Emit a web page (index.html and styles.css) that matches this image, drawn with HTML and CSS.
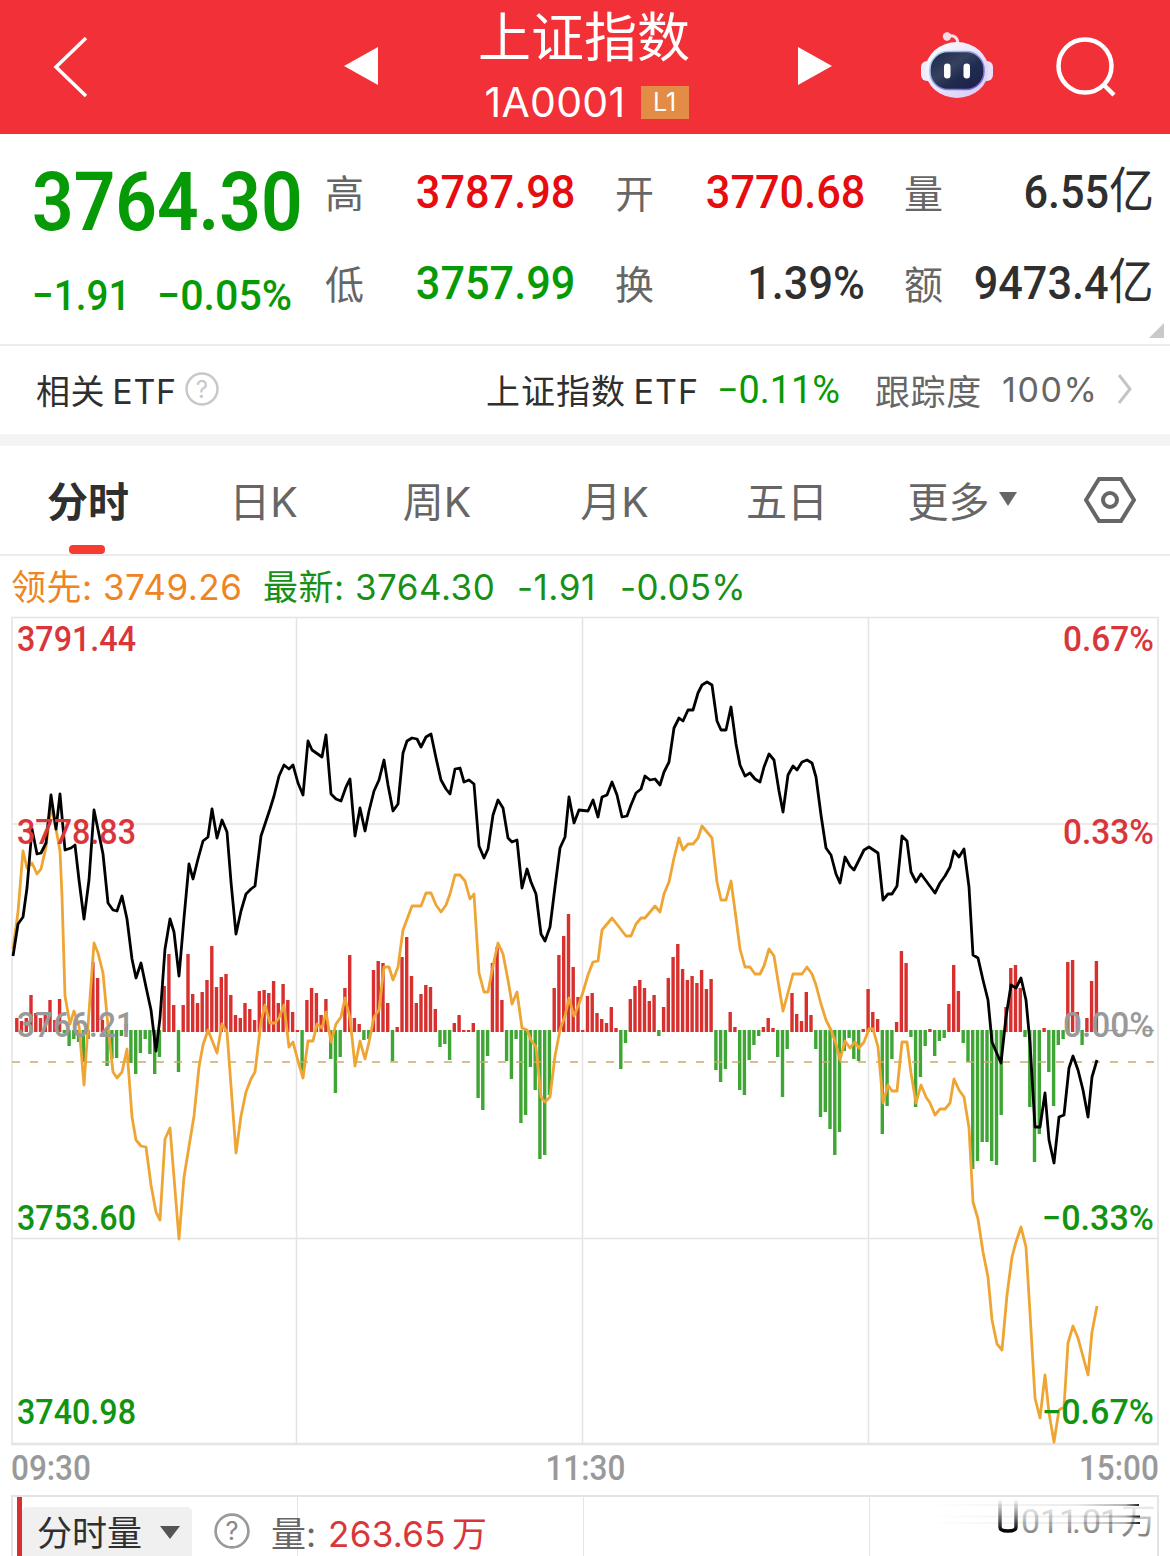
FILE: index.html
```html
<!DOCTYPE html>
<html lang="zh-CN">
<head>
  <meta charset="UTF-8">
  <meta name="viewport" content="width=device-width, initial-scale=1">
  <title>上证指数 1A0001</title>
  <link rel="stylesheet" href="styles.css">
</head>
<body>
  <!-- 顶部导航 -->
  <header class="header">
    <svg class="back" width="40" height="66" viewBox="0 0 40 66"><path d="M35 4 L5 33 L35 62"/></svg>
    <svg class="prev" width="36" height="40" viewBox="0 0 36 40"><path d="M1 20 L35 1 V39 Z"/></svg>
    <div class="title">
      <h1>上证指数</h1>
      <div class="code"><span>1A0001</span><b>L1</b></div>
    </div>
    <svg class="next" width="36" height="40" viewBox="0 0 36 40"><path d="M35 20 L1 1 V39 Z"/></svg>
    <svg class="robot" width="74" height="68" viewBox="0 0 74 68">
      <defs>
        <linearGradient id="shell" x1="0" y1="0" x2="1" y2="1">
          <stop offset="0" stop-color="#fff"/>
          <stop offset=".5" stop-color="#e9e4fb"/>
          <stop offset="1" stop-color="#d3c6f3"/>
        </linearGradient>
        <linearGradient id="rim" x1="0" y1="0" x2="1" y2="1">
          <stop offset="0" stop-color="#a9dcec"/>
          <stop offset="1" stop-color="#6f4fd2"/>
        </linearGradient>
        <linearGradient id="face" x1="0" y1="0" x2="1" y2="1">
          <stop offset="0" stop-color="#1b2748"/>
          <stop offset=".4" stop-color="#36415f"/>
          <stop offset=".6" stop-color="#202b50"/>
          <stop offset="1" stop-color="#1c2047"/>
        </linearGradient>
      </defs>
      <path d="M27 5 Q37 3 38 12" fill="none" stroke="#f6dce9" stroke-width="3"/>
      <circle cx="27" cy="5.500" r="4.200" fill="#f3dce8"/>
      <rect x="1" y="30" width="14" height="20" rx="6" fill="#f0ebfc"/>
      <rect x="59" y="30" width="14" height="20" rx="6" fill="#e8e0fa"/>
      <ellipse cx="37" cy="39" rx="31.500" ry="28" fill="url(#shell)"/>
      <rect x="10" y="20.500" width="54" height="38" rx="18" fill="url(#face)" stroke="url(#rim)" stroke-width="1.500"/>
      <rect x="24" y="32.500" width="6.500" height="15" rx="3.200" fill="#fff"/>
      <rect x="43.500" y="32.500" width="6.500" height="15" rx="3.200" fill="#fff"/>
    </svg>
    <svg class="search" width="64" height="64" viewBox="0 0 64 64"><circle cx="30" cy="30" r="26.500"/><path d="M49 49 L59 59"/></svg>
  </header>

  <!-- 行情数据 -->
  <section class="quote">
    <div class="price">
      <div class="last"><span class="din">3764.30</span></div>
      <div class="change"><span class="din">−1.91</span><span class="din wide">−0.05%</span></div>
    </div>
    <dl class="stats">
      <dt>高</dt><dd class="red"><span class="din">3787.98</span></dd>
      <dt>开</dt><dd class="red"><span class="din">3770.68</span></dd>
      <dt>量</dt><dd><span class="din">6.55<i>亿</i></span></dd>
      <dt>低</dt><dd class="green"><span class="din">3757.99</span></dd>
      <dt>换</dt><dd><span class="din">1.39%</span></dd>
      <dt>额</dt><dd><span class="din">9473.4<i>亿</i></span></dd>
    </dl>
    <span class="corner"></span>
  </section>

  <!-- 相关ETF -->
  <section class="etf">
    <span class="etf-title">相关 ETF</span>
    <svg class="help" width="34" height="34" viewBox="0 0 34 34"><circle cx="17" cy="17" r="15.500"/><text x="17" y="25.500">?</text></svg>
    <span class="etf-name">上证指数 ETF</span>
    <span class="etf-rate"><span class="din wide">−0.11%</span></span>
    <span class="etf-track">跟踪度</span>
    <span class="etf-full">100%</span>
    <svg class="more" width="16" height="32" viewBox="0 0 16 32"><path d="M2 2 L13 16 L2 30"/></svg>
  </section>

  <!-- 周期切换 -->
  <nav class="tabs">
    <a class="active">分时</a>
    <a>日K</a>
    <a>周K</a>
    <a>月K</a>
    <a>五日</a>
    <a class="drop">更多<svg width="18" height="14" viewBox="0 0 18 14"><path d="M0 0 H18 L9 14 Z"/></svg></a>
    <svg class="setting" width="52" height="46" viewBox="0 0 52 46"><path d="M15 2 H37 L50 23 L37 44 H15 L2 23 Z"/><circle cx="26" cy="23" r="7"/></svg>
  </nav>

  <div class="legend">
    <span class="lead">领先: 3749.26</span>
    <span class="new">最新: 3764.30</span>
    <span class="diff">-1.91</span>
    <span class="pct">-0.05%</span>
  </div>

  <!-- 分时图 -->
  <svg class="chart" width="1170" height="832" viewBox="0 615 1170 832">
    <g class="grid">
      <path d="M11 617.500 H1159 M12 824 H1158 M12 1238.500 H1158"/>
      <path d="M12 617 V1444 M296.500 617 V1444 M582.500 617 V1444 M868.500 617 V1444 M1158 617 V1444"/>
      <path class="base" d="M11 1444 H1159"/>
    </g>
    <path class="zero" d="M1108 1030.500 H1158"/>
    <path id="up" class="bar-up"/>
    <path id="down" class="bar-down"/>
    <path class="now" d="M12 1062 H1158"/>
    <polyline id="lead" class="line-lead"/>
    <polyline id="price" class="line-price"/>
    <g class="axis">
      <text class="r" x="17" y="651" textLength="119" lengthAdjust="spacingAndGlyphs">3791.44</text>
      <text class="r" x="17" y="844" textLength="119" lengthAdjust="spacingAndGlyphs">3778.83</text>
      <text class="z" x="17" y="1037" textLength="117" lengthAdjust="spacingAndGlyphs">3766.21</text>
      <text class="g" x="17" y="1230" textLength="119" lengthAdjust="spacingAndGlyphs">3753.60</text>
      <text class="g" x="17" y="1424" textLength="119" lengthAdjust="spacingAndGlyphs">3740.98</text>
      <text class="r" x="1063" y="651" textLength="91" lengthAdjust="spacingAndGlyphs">0.67%</text>
      <text class="r" x="1063" y="844" textLength="91" lengthAdjust="spacingAndGlyphs">0.33%</text>
      <text class="z" x="1063" y="1037" textLength="91" lengthAdjust="spacingAndGlyphs">0.00%</text>
      <text class="g" x="1042" y="1230" textLength="112" lengthAdjust="spacingAndGlyphs">−0.33%</text>
      <text class="g" x="1042" y="1424" textLength="112" lengthAdjust="spacingAndGlyphs">−0.67%</text>
    </g>
  </svg>

  <div class="times"><span class="din">09:30</span><span class="din">11:30</span><span class="din">15:00</span></div>

  <!-- 分时量 -->
  <section class="volume">
    <span class="mark"></span>
    <button class="picker">分时量<svg width="20" height="13" viewBox="0 0 20 13"><path d="M0 0 H20 L10 13 Z"/></svg></button>
    <svg class="help dark" width="36" height="36" viewBox="0 0 34 34"><circle cx="17" cy="17" r="15.500"/><text x="17" y="25.500">?</text></svg>
    <span class="vol-label">量:</span>
    <span class="vol-value">263.65 万</span>
    <svg class="vol-max" width="230" height="48" viewBox="0 0 230 48">
      <defs>
        <linearGradient id="fade" x1="0" y1="4" x2="0" y2="36" gradientUnits="userSpaceOnUse">
          <stop offset="0" stop-color="#999" stop-opacity="0"/>
          <stop offset="1" stop-color="#858585"/>
        </linearGradient>
        <linearGradient id="ink" x1="0" y1="2" x2="0" y2="34" gradientUnits="userSpaceOnUse">
          <stop offset="0" stop-color="#000" stop-opacity="0"/>
          <stop offset=".5" stop-color="#000" stop-opacity=".45"/>
          <stop offset="1" stop-color="#000"/>
        </linearGradient>
        <linearGradient id="streak" x1="0" y1="0" x2="1" y2="0">
          <stop offset="0" stop-color="#000" stop-opacity="0"/>
          <stop offset=".7" stop-color="#000" stop-opacity=".08"/>
          <stop offset=".93" stop-color="#000" stop-opacity=".3"/>
          <stop offset="1" stop-color="#000" stop-opacity=".9"/>
        </linearGradient>
      </defs>
      <path d="M73 3 V30 Q73 34 81 34 Q89 34 89 30 V3" fill="none" stroke="url(#ink)" stroke-width="3.500"/>
      <text class="digits" x="94 113 132 145 155 173" y="36">011.01</text>
      <text class="unit" x="194" y="37">万</text>
      <path d="M0 7 H212 V9 H0 Z M0 18.500 H213 V20.500 H0 Z M0 25 H213 V27 H0 Z" fill="url(#streak)"/>
    </svg>
  </section>

  <script src="script.js"></script>
</body>
</html>
```
FILE: styles.css
```css
* {
  margin: 0;
  padding: 0;
  box-sizing: border-box;
}
body {
  width: 1170px;
  height: 1556px;
  overflow: hidden;
  background: #fff;
  color: #2f2f2f;
  font-family: Inter, 'Noto Sans CJK SC', sans-serif;
}
svg {
  display: block;
  flex: none;
}
.din {
  display: inline-block;
  font-family: Roboto, 'Noto Sans CJK SC', sans-serif;
  font-weight: 500;
  white-space: nowrap;
  transform: scaleX(.92);
  transform-origin: left;
}
/* 顶部导航 */
.header {
  display: grid;
  grid-template-columns: 343px 36px 418px 36px 87px 74px 61px 64px;
  align-items: center;
  height: 134px;
  background: #f23037;
  color: #fff;
}
.back {
  margin-left: 51px;
  fill: none;
  stroke: #fff;
  stroke-width: 3.5;
}
.prev, .next {
  fill: #fff;
  margin-top: -2px;
}
.robot {
  grid-column: 6;
  margin-top: -4px;
}
.search {
  grid-column: 8;
  margin-top: 2px;
  fill: none;
  stroke: #fff;
  stroke-width: 4.5;
}
.title {
  height: 134px;
  text-align: center;
}
.title h1 {
  height: 78px;
  padding-right: 8px;
  font-size: 53px;
  line-height: 76px;
  font-weight: 400;
}
.code {
  display: flex;
  justify-content: center;
  align-items: center;
  gap: 15px;
  height: 48px;
  padding-right: 3px;
  font-size: 41px;
  font-weight: 400;
}
.code span {
  letter-spacing: .3px;
}
.code b {
  width: 48px;
  height: 33px;
  background: #e28c46;
  font-size: 25px;
  line-height: 33px;
  font-weight: 400;
}
/* 行情数据 */
.quote {
  position: relative;
  display: flex;
  height: 212px;
  border-bottom: 2px solid #ececec;
}
.price {
  width: 325px;
  padding-left: 32px;
  color: #069a06;
}
.last {
  height: 134px;
  font-size: 81px;
  line-height: 134px;
}
.last .din {
  font-weight: 600;
  transform: scaleX(.9);
}
.change {
  display: flex;
  font-size: 42px;
  line-height: 55px;
}
.change .din:first-child {
  width: 125px;
}
.change .wide {
  transform: scaleX(.98);
}
.stats {
  display: grid;
  grid-template-columns: 40px 210px 40px 40px 210px 39px 40px 210px;
  grid-template-rows: 91px 91px;
  align-content: start;
  padding-top: 13px;
  line-height: 91px;
}
.stats dt {
  color: #666;
  font-size: 39px;
  line-height: 94px;
}
.stats dt:nth-of-type(3n+2) {
  grid-column: 4;
}
.stats dt:nth-of-type(3n) {
  grid-column: 7;
}
.stats dd {
  font-size: 47px;
  line-height: 88px;
  text-align: right;
}
.stats .din {
  transform-origin: right;
}
.stats i {
  font-size: 49px;
  font-style: normal;
  font-weight: 400;
}
.red {
  color: #e60c10;
}
.green {
  color: #069a06;
}
.corner {
  position: absolute;
  right: 6px;
  bottom: 6px;
  border-left: 15px solid transparent;
  border-bottom: 15px solid #c9c9c9;
}
/* 相关ETF */
.etf {
  display: flex;
  align-items: center;
  height: 100px;
  padding: 0 0 2px 36px;
  border-bottom: 12px solid #f4f4f4;
  font-size: 34px;
}
.etf-title {
  width: 149px;
  white-space: nowrap;
  letter-spacing: .6px;
  word-spacing: -3px;
}
.etf-name {
  width: 231px;
  margin-left: 267px;
  white-space: nowrap;
  letter-spacing: 1px;
  word-spacing: -3px;
}
.etf-rate {
  width: 158px;
  color: #069a06;
  font-size: 38px;
}
.etf-rate .din {
  font-weight: 400;
  transform: scaleX(.995);
}
.etf-track {
  width: 127px;
  color: #666;
  font-size: 35px;
  letter-spacing: .6px;
}
.etf-full {
  width: 115px;
  color: #666;
  letter-spacing: 1.6px;
}
.help {
  fill: none;
  stroke: #c8c8c8;
  stroke-width: 2.5;
}
.help text {
  fill: #c8c8c8;
  stroke: none;
  font-size: 24px;
  text-anchor: middle;
}
.help.dark {
  stroke: #999;
}
.help.dark text {
  fill: #888;
}
.more {
  fill: none;
  stroke: #c4c4c4;
  stroke-width: 3;
}
/* 周期切换 */
.tabs {
  display: grid;
  grid-template-columns: 176px 175px 172px 183px 162px 216px 52px;
  align-items: center;
  height: 110px;
  border-bottom: 2px solid #ececec;
  color: #666;
  font-size: 41px;
}
.tabs a {
  position: relative;
  display: flex;
  align-items: center;
  justify-content: center;
  height: 108px;
  padding-bottom: 2px;
}
.tabs .drop {
  padding-right: 28px;
}
.tabs a svg {
  margin-left: 9px;
  fill: #666;
}
.tabs .active {
  color: #2f2f2f;
  font-weight: 700;
}
.tabs .active::after {
  content: '';
  position: absolute;
  left: 69px;
  bottom: 0;
  width: 36px;
  height: 9px;
  border-radius: 4px;
  background: #f53b32;
}
.setting {
  fill: none;
  stroke: #666;
  stroke-width: 4;
}
.legend {
  display: flex;
  height: 59px;
  padding-left: 11px;
  color: #189018;
  font-size: 35px;
  line-height: 62px;
  letter-spacing: .5px;
  white-space: nowrap;
}
.lead {
  width: 252px;
  color: #ee8422;
}
.new {
  width: 254px;
}
.diff {
  width: 103px;
}
.pct {
  letter-spacing: .3px;
}
/* 分时图 */
.grid {
  fill: none;
  stroke: #e4e4e4;
  stroke-width: 1.5;
}
.base {
  stroke-width: 2.5;
}
.bar-up, .bar-down {
  fill: none;
  stroke-width: 3.4;
}
.bar-up {
  stroke: #d8302e;
}
.bar-down {
  stroke: #3fa535;
}
.zero {
  stroke: #999;
  stroke-width: 1.5;
  stroke-dasharray: 10 8;
}
.now {
  stroke: #c9ac6c;
  stroke-width: 1.4;
  stroke-dasharray: 8 10;
}
.line-lead, .line-price {
  fill: none;
  stroke-width: 2.8;
  stroke-linejoin: round;
}
.line-lead {
  stroke: #efa534;
}
.line-price {
  stroke: #000;
}
.axis {
  font: 500 35px Roboto, sans-serif;
}
.r {
  fill: #d9363b;
}
.g {
  fill: #119411;
}
.z {
  fill: #999;
}
.times {
  display: flex;
  justify-content: space-between;
  height: 48px;
  padding: 0 11px;
  color: #999;
  font-size: 35px;
  line-height: 43px;
}
.times .din {
  transform: scaleX(.9);
}
.times .din:nth-child(2) {
  transform-origin: center;
}
.times .din:last-child {
  transform-origin: right;
}
/* 分时量 */
.volume {
  display: flex;
  align-items: center;
  height: 70px;
  margin: 0 11px;
  border: 2px solid #e4e4e4;
  border-bottom: 0;
  background: linear-gradient(#e4e4e4, #e4e4e4) 284px 0 / 1px 100% no-repeat,
    linear-gradient(#e4e4e4, #e4e4e4) 570px 0 / 1px 100% no-repeat,
    linear-gradient(#e4e4e4, #e4e4e4) 856px 0 / 1px 100% no-repeat;
  font-size: 35px;
  white-space: nowrap;
}
.mark {
  align-self: stretch;
  width: 5px;
  margin-left: 4px;
  background: #d8302e;
}
.picker {
  display: flex;
  align-items: center;
  width: 170px;
  height: 49px;
  margin-right: 22px;
  padding: 3px 0 0 15px;
  border: 0;
  border-radius: 5px 5px 0 0;
  background: #f0f0f0;
  color: #2f2f2f;
  font: inherit;
  line-height: 46px;
}
.picker svg {
  margin-left: 18px;
  fill: #555;
}
.vol-label {
  width: 57px;
  margin-left: 21px;
  color: #666;
}
.vol-value {
  color: #d9363b;
  word-spacing: -4px;
  letter-spacing: .3px;
}
.vol-max {
  align-self: flex-start;
  margin-left: auto;
}
.digits {
  fill: url(#fade);
  font: 400 34px Roboto, sans-serif;
}
.unit {
  fill: url(#fade);
  font-size: 35px;
}
```
FILE: script.js
```js
(function () {
  var ZERO = 1031;
  var STEP = 4.756;

  // 红绿柱，每分钟一根
  var bars = [
    13, 10, 13, 36, 18, 13, 17, 31, 11, 32, -2, -15, -8, -11, -31, -8, 69, 53, 11, -35,
    -28, -27, -5, 7, -32, -43, -22, -8, -23, -43, -26, 45, 77, 26, -41, 26, 77, 37, 28, 39,
    51, 85, 44, 54, 57, 36, 16, 13, 28, 22, 11, 40, 41, 38, 50, 28, 47, 31, 19, 1,
    -41, 31, 43, 38, 16, 32, -28, -62, -26, 43, 76, 13, 7, -9, -8, 61, 70, 68, 28, -30,
    4, 74, 94, 55, 28, 37, 46, 44, 22, -16, -13, -29, 8, 16, 1, 1, 8, -67, -79, -25,
    68, 84, 31, -30, -48, -8, -92, -84, -36, -59, -128, -124, -64, 43, 76, 95, 117, 64, 34, 1,
    35, 38, 18, 12, 8, 24, 3, -38, -12, 32, 45, 51, 43, 30, 36, -5, 24, 53, 74, 87,
    62, 51, 55, 48, 61, 42, 52, -39, -51, -38, 19, 4, -59, -64, -29, -14, -5, 4, 13, 3,
    -26, -66, -18, 38, 17, 10, 39, 16, -18, -86, -81, -98, -124, -101, -20, -7, -28, -30, 2, 42,
    19, 12, -103, -75, -28, 9, 80, 68, -6, -76, -46, -15, 2, -25, -10, -7, 27, 66, 40, -12,
    -31, -138, -130, -111, -111, -130, -134, -84, 24, 63, 66, 43, -6, -76, -131, -103, 3, -41, -75, -14,
    -8, 69, 71, 19, -14, 13, 50, 70
  ];

  // 最新
  var price = '13,956 18,924 23,917 27,888 32,829 37,854 41,853 46,843 51,795 56,829 60,794 65,850 71,848 75,845 79,880 84,919 ' +
    '89,880 94,810 103,854 108,903 113,910 117,911 122,896 127,919 132,959 136,978 141,963 146,987 151,1010 156,1051 160,1018 165,949 ' +
    '170,919 174,932 179,976 184,918 189,864 193,879 198,859 203,841 208,837 212,809 217,838 222,820 227,832 231,882 236,934 241,911 ' +
    '246,894 251,889 255,886 261,836 265,824 270,809 274,796 279,776 284,765 289,769 293,765 298,783 303,795 308,741 312,750 322,757 ' +
    '326,735 331,794 336,799 341,801 346,787 350,779 355,836 360,808 365,831 369,811 374,791 379,780 384,760 388,785 393,811 398,804 ' +
    '403,753 407,741 412,738 417,739 421,747 426,737 431,734 436,758 441,780 446,789 450,794 455,769 460,768 464,782 469,780 474,784 ' +
    '479,846 484,858 488,849 493,815 498,800 503,808 508,838 512,842 517,840 522,888 527,869 531,882 536,894 541,934 545,941 550,927 ' +
    '555,887 560,848 565,837 569,797 574,823 579,810 588,811 593,800 598,817 602,797 607,795 612,782 617,795 622,817 627,816 631,805 ' +
    '636,793 641,789 645,776 650,780 655,779 660,785 664,772 669,762 674,728 679,718 683,721 688,710 693,710 698,693 702,685 707,682 ' +
    '712,685 717,721 721,730 726,730 731,707 736,744 740,765 745,776 750,773 755,779 760,782 764,767 769,754 774,760 779,791 783,812 ' +
    '788,775 793,766 797,770 802,762 807,760 812,763 816,777 821,815 826,848 831,855 836,874 840,883 845,857 850,866 854,870 859,860 ' +
    '864,850 869,847 878,853 883,900 888,894 892,894 897,886 902,836 907,841 911,872 916,882 921,874 935,893 940,883 945,876 950,867 ' +
    '954,851 959,857 964,849 969,887 973,955 978,958 983,980 988,1000 992,1042 1001,1063 1006,1017 1011,985 1016,988 1021,978 1026,1000 ' +
    '1030,1043 1035,1127 1040,1127 1045,1093 1049,1140 1054,1163 1059,1117 1064,1115 1069,1068 1073,1056 1078,1070 1083,1090 1088,1117 1092,1077 1097,1060';

  // 领先
  var lead = '13,949 18,912 23,851 27,868 32,863 37,874 41,869 46,847 51,806 56,829 60,851 62,896 65,996 70,1024 74,1011 79,1026 ' +
    '84,1085 89,1012 94,943 98,953 103,973 108,1026 113,1072 117,1078 122,1072 127,1049 132,1117 136,1140 141,1146 146,1147 151,1185 156,1212 ' +
    '160,1220 165,1139 170,1128 179,1239 184,1177 194,1116 199,1067 203,1045 208,1030 217,1053 222,1024 227,1032 236,1153 241,1116 246,1092 251,1079 ' +
    '255,1072 261,1022 265,1005 270,1023 275,1023 279,1018 284,1005 289,1047 293,1042 298,1061 303,1078 308,1041 313,1041 317,1024 322,1028 326,1012 ' +
    '331,1042 336,1024 341,1017 345,998 350,1018 355,1066 360,1041 365,1059 369,1042 374,1017 379,1010 384,967 389,967 393,980 398,967 403,930 ' +
    '412,906 421,906 426,893 431,893 436,905 441,912 446,905 450,894 455,875 460,875 465,881 470,899 474,894 479,973 484,992 488,992 ' +
    '493,966 498,943 503,954 508,980 512,1004 517,992 522,1028 527,1030 531,1040 536,1047 541,1097 545,1102 550,1097 555,1056 560,1030 565,1016 ' +
    '569,998 574,1016 579,1004 583,992 588,975 593,962 598,961 602,930 612,918 626,936 631,936 636,924 641,918 645,918 655,906 660,912 ' +
    '664,894 669,882 674,858 679,838 683,850 688,844 693,844 698,838 702,826 712,838 717,882 721,900 726,900 731,881 736,918 740,949 ' +
    '745,967 750,967 755,974 760,974 764,966 769,949 774,956 779,987 783,1011 793,974 802,974 807,967 812,974 816,985 821,1004 826,1020 ' +
    '831,1030 836,1044 840,1060 845,1041 850,1048 855,1042 859,1048 864,1042 869,1029 873,1029 878,1047 883,1103 888,1085 892,1091 897,1091 902,1042 ' +
    '907,1042 911,1073 916,1103 921,1085 926,1097 930,1103 935,1115 940,1109 945,1109 950,1103 954,1079 959,1090 964,1097 969,1128 973,1202 978,1219 ' +
    '983,1252 988,1277 992,1320 997,1344 1002,1350 1007,1295 1012,1257 1016,1242 1021,1227 1026,1247 1030,1313 1035,1398 1040,1418 1045,1375 1049,1413 1054,1442 ' +
    '1059,1410 1064,1407 1068,1343 1073,1326 1078,1338 1088,1375 1092,1332 1097,1306';

  var up = '';
  var down = '';
  bars.forEach(function (h, i) {
    var x = (12 + STEP * (i + 1)).toFixed(1);
    if (h > 0) {
      up += 'M' + x + ' ' + (ZERO + 1) + 'V' + (ZERO - h);
    } else {
      down += 'M' + x + ' ' + (ZERO - 1) + 'V' + (ZERO - h);
    }
  });

  document.getElementById('up').setAttribute('d', up);
  document.getElementById('down').setAttribute('d', down);
  document.getElementById('price').setAttribute('points', price);
  document.getElementById('lead').setAttribute('points', lead);
})();
```
